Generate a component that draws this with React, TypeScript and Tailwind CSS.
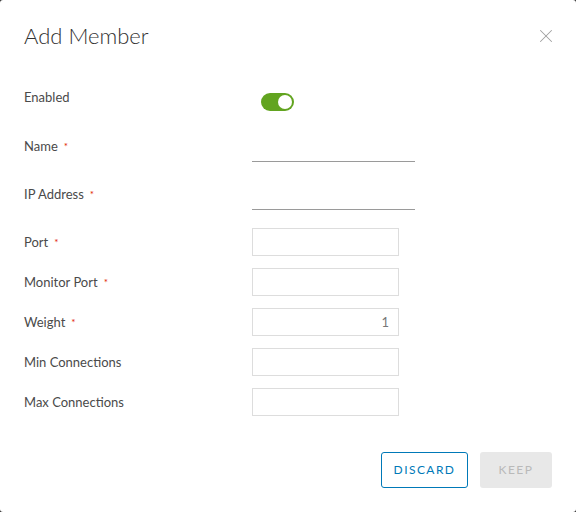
import { X } from 'lucide-react';

const Star = () => <span className="ml-[6px] text-[#e12200] text-[10px] align-top">*</span>;

type FieldProps = { label: string; required?: boolean; value?: string };

const BoxField = ({ label, required, value }: FieldProps) => (
  <div className="flex h-[28px] items-center">
    <div className="w-[228px] text-[13px] leading-[18px] text-[#4a4a4a]">
      {label}
      {required && <Star />}
    </div>
    <input
      readOnly
      value={value ?? ''}
      className="h-[28px] w-[147px] border border-[#dddddd] bg-white px-[9px] text-right text-[13px] text-[#777777] outline-none"
    />
  </div>
);

const LineField = ({ label }: { label: string }) => (
  <div className="flex h-[25px] items-start">
    <div className="w-[228px] text-[13px] leading-[18px] text-[#4a4a4a]">
      {label}
      <Star />
    </div>
    <div className="h-[25px] w-[163px] border-b border-[#9a9a9a]" />
  </div>
);

export default function App() {
  return (
    <div className="h-[512px] w-[576px] bg-[#313131] font-['Lato',sans-serif]">
      <div className="flex h-full w-full flex-col rounded-[3px] bg-white pl-[24px] pr-[24px]">
        <div className="mt-[22px] flex h-[28px] items-center justify-between">
          <h1 className="text-[22px] font-light leading-[28px] text-[#313131]">Add Member</h1>
          <X size={22} strokeWidth={1.1} className="mr-[-5px] text-[#a0a0a0]" />
        </div>

        <div className="mt-[38px] flex h-[26px] items-start">
          <div className="w-[228px] text-[13px] leading-[18px] text-[#4a4a4a]">Enabled</div>
          <div className="ml-[9px] mt-[5px] flex h-[18px] w-[33px] items-center justify-end rounded-full bg-[#62a420] pr-[2px]">
            <div className="h-[14px] w-[14px] rounded-full bg-white" />
          </div>
        </div>

        <div className="mt-[23px]">
          <LineField label="Name" />
        </div>
        <div className="mt-[23px]">
          <LineField label="IP Address" />
        </div>

        <div className="mt-[18px] flex flex-col gap-[12px]">
          <BoxField label="Port" required />
          <BoxField label="Monitor Port" required />
          <BoxField label="Weight" required value="1" />
          <BoxField label="Min Connections" />
          <BoxField label="Max Connections" />
        </div>

        <div className="mt-[36px] flex justify-end gap-[12px]">
          <button className="h-[36px] w-[87px] rounded-[3px] border border-[#0079b8] text-[12px] font-normal tracking-[0.12em] text-[#0079b8]">
            DISCARD
          </button>
          <button className="h-[36px] w-[72px] rounded-[3px] bg-[#e8e8e8] text-[12px] font-normal tracking-[0.12em] text-[#b9b9b9]">
            KEEP
          </button>
        </div>
      </div>
    </div>
  );
}
